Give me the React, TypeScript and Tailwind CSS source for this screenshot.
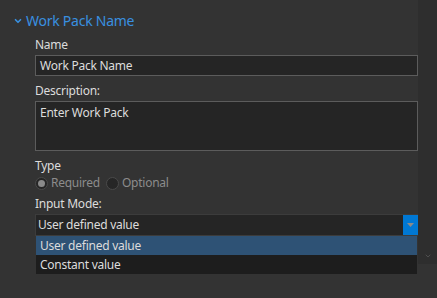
import { ChevronDown } from 'lucide-react';

function Radio({ label, checked }: { label: string; checked?: boolean }) {
    return (
        <label className="flex items-center gap-[3px]">
            <span className="w-[13px] h-[13px] rounded-full border border-[#4a4a4a] bg-[#262626] flex items-center justify-center">
                {checked && <span className="w-[7px] h-[7px] rounded-full bg-[#8a8a8a]" />}
            </span>
            <span className="text-[#8c8c8c]">{label}</span>
        </label>
    );
}

export default function App() {
    return (
        <div className="w-[437px] h-[298px] bg-[#333333] flex overflow-hidden text-[12px] tracking-[-0.25px] text-[#dcdcdc]" style={{ fontFamily: '"Noto Sans", "Open Sans", sans-serif' }}>
            <div className="flex-1 relative">
                <div className="flex items-center gap-[3px] pl-[13px] pt-[11px] h-[30px] text-[#3990e0] text-[14px]">
                    <ChevronDown className="w-[10px] h-[10px]" strokeWidth={4} />
                    <span>Work Pack Name</span>
                </div>

                <div className="pl-[35px] mt-[5px] flex flex-col">
                    <span className="leading-[20px]">Name</span>
                    <div className="h-[21px] border border-[#5c5c5c] bg-[#252525] px-[4px] leading-[19px]">Work Pack Name</div>

                    <span className="leading-[20px] mt-[5px]">Description:</span>
                    <div className="h-[50px] border border-[#5c5c5c] bg-[#252525] px-[4px] pt-[3px] leading-[16px]">Enter Work Pack</div>

                    <span className="leading-[20px] mt-[5px]">Type</span>
                    <div className="flex gap-[6px] h-[14px] items-center">
                        <Radio label="Required" checked />
                        <Radio label="Optional" />
                    </div>

                    <span className="leading-[20px] mt-[4px]">Input Mode:</span>
                    <div className="h-[22px] flex border border-[#3c3c3c] border-r-0 bg-[#252525]">
                        <span className="flex-1 px-[2px] leading-[20px]">User defined value</span>
                        <span className="w-[15px] bg-[#0078d4] flex items-center justify-center">
                            <svg width="7" height="5" viewBox="0 0 7 5"><path d="M0 0h7L3.5 4z" fill="#8a8a8a" /></svg>
                        </span>
                    </div>
                    <div className="mx-[1px] flex flex-col">
                        <span className="h-[19px] bg-[#2e5275] px-[4px] leading-[19px]">User defined value</span>
                        <span className="h-[19px] bg-[#1d1d1d] px-[4px] leading-[19px]">Constant value</span>
                    </div>
                </div>
            </div>
            <div className="w-[19px] h-[264px] bg-[#2e2e2e] flex flex-col justify-end items-center pb-[4px]">
                <ChevronDown className="w-[8px] h-[8px] text-[#555555]" strokeWidth={2.5} />
            </div>
        </div>
    );
}
